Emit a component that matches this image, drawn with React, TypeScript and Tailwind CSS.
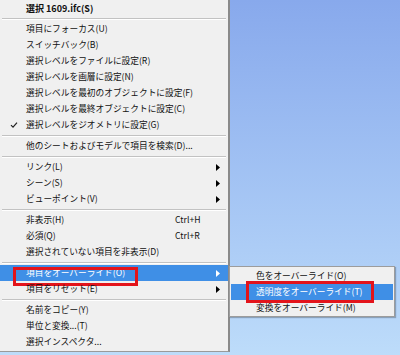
import React from "react";

type Item =
  | { type: "sep" }
  | { type: "item"; label: string; shortcut?: string; arrow?: boolean; check?: boolean; bold?: boolean; active?: boolean; boxed?: boolean };

const items: Item[] = [
  { type: "item", label: "選択 1609.ifc(S)", bold: true },
  { type: "sep" },
  { type: "item", label: "項目にフォーカス(U)" },
  { type: "item", label: "スイッチバック(B)" },
  { type: "item", label: "選択レベルをファイルに設定(R)" },
  { type: "item", label: "選択レベルを画層に設定(N)" },
  { type: "item", label: "選択レベルを最初のオブジェクトに設定(F)" },
  { type: "item", label: "選択レベルを最終オブジェクトに設定(C)" },
  { type: "item", label: "選択レベルをジオメトリに設定(G)", check: true },
  { type: "sep" },
  { type: "item", label: "他のシートおよびモデルで項目を検索(D)..." },
  { type: "sep" },
  { type: "item", label: "リンク(L)", arrow: true },
  { type: "item", label: "シーン(S)", arrow: true },
  { type: "item", label: "ビューポイント(V)", arrow: true },
  { type: "sep" },
  { type: "item", label: "非表示(H)", shortcut: "Ctrl+H" },
  { type: "item", label: "必須(Q)", shortcut: "Ctrl+R" },
  { type: "item", label: "選択されていない項目を非表示(D)" },
  { type: "sep" },
  { type: "item", label: "項目をオーバーライド(O)", arrow: true, active: true, boxed: true },
  { type: "item", label: "項目をリセット(E)", arrow: true },
  { type: "sep" },
  { type: "item", label: "名前をコピー(Y)" },
  { type: "item", label: "単位と変換...(T)" },
  { type: "item", label: "選択インスペクタ..." },
];

function Arrow({ white }: { white?: boolean }) {
  return (
    <svg width="4" height="7" viewBox="0 0 4 7" className="block">
      <path d="M0 0 L4 3.5 L0 7 Z" fill={white ? "#ffffff" : "#000000"} />
    </svg>
  );
}

function Check() {
  return (
    <svg width="8" height="8" viewBox="0 0 8 8" className="block">
      <path d="M1 4.2 L3 6.2 L7 1.6" fill="none" stroke="#222" strokeWidth="1.2" />
    </svg>
  );
}

export default function App() {
  return (
    <div
      className="relative w-[400px] h-[355px] overflow-hidden bg-gradient-to-b from-[#88a9ec] to-[#bddcfa] text-[8.7px] leading-none text-[#111]"
      style={{ fontFamily: '"Noto Sans CJK JP", "Noto Sans", sans-serif' }}
    >
      <div className="w-[230px] h-[352px] bg-[#f0f0f0] border-r-2 border-b border-r-[#8a8a8a] border-b-[#9a9a9a] flex flex-col">
        {items.map((it, i) =>
          it.type === "sep" ? (
            <div key={i} className="h-[5px] flex items-center px-[2px]">
              <div className="w-full border-t border-t-[#c2c2c2] border-b border-b-[#ffffff]" />
            </div>
          ) : (
            <div
              key={i}
              className={
                "relative h-4 flex items-center shrink-0 " +
                (it.active ? "bg-[#3f8fe6] text-white" : "")
              }
            >
              <div className="w-[26px] flex justify-center pl-[2px] shrink-0">{it.check ? <Check /> : null}</div>
              <div className={"flex-1 whitespace-nowrap " + (it.bold ? "font-bold text-[9px]" : "")}>{it.label}</div>
              {it.shortcut ? <div className="w-[41px] whitespace-nowrap shrink-0">{it.shortcut}</div> : null}
              <div className="w-[12px] shrink-0 flex">{it.arrow ? <Arrow white={it.active} /> : null}</div>
              {it.boxed ? (
                <div className="absolute left-[13px] top-[2px] w-[125px] h-[19px] border-[3px] border-[#e3141b]" />
              ) : null}
            </div>
          )
        )}
      </div>

      <div className="absolute left-[229px] top-[266px] w-[166px] h-[51px] bg-[#f0f0f0] border border-[#9c9c9c] shadow-[1px_1px_1px_rgba(0,0,0,0.25)] flex flex-col pt-[1px] px-[1px]">
        <div className="h-4 flex items-center pl-[25px] whitespace-nowrap">色をオーバーライド(O)</div>
        <div className="relative h-4 flex items-center pl-[25px] whitespace-nowrap bg-[#3f8fe6] text-white">
          透明度をオーバーライド(T)
          <div className="absolute left-[15px] top-[-3px] w-[128px] h-[22px] border-[3px] border-[#e3141b]" />
        </div>
        <div className="h-4 flex items-center pl-[25px] whitespace-nowrap">変換をオーバーライド(M)</div>
      </div>
    </div>
  );
}
